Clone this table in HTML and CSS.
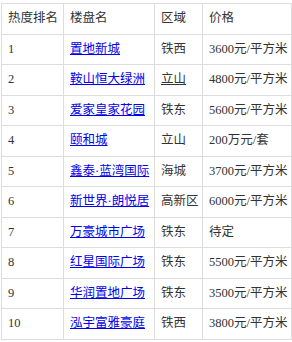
FILE: index.html
```html
<!DOCTYPE html>
<html>
<head>
<meta charset="utf-8">
<link rel="stylesheet" href="styles.css">
</head>
<body>
<table class="rank">
  <colgroup>
    <col class="c-rank">
    <col class="c-name">
    <col class="c-area">
    <col class="c-price">
  </colgroup>
  <thead>
    <tr><th>热度排名</th><th>楼盘名</th><th>区域</th><th>价格</th></tr>
  </thead>
  <tbody>
    <tr><td>1</td><td><a href="#">置地新城</a></td><td>铁西</td><td>3600元/平方米</td></tr>
    <tr><td>2</td><td><a href="#">鞍山恒大绿洲</a></td><td><a class="plain" href="#">立山</a></td><td>4800元/平方米</td></tr>
    <tr><td>3</td><td><a href="#">爱家皇家花园</a></td><td>铁东</td><td>5600元/平方米</td></tr>
    <tr><td>4</td><td><a href="#">颐和城</a></td><td>立山</td><td>200万元/套</td></tr>
    <tr><td>5</td><td><a href="#">鑫泰·蓝湾国际</a></td><td>海城</td><td>3700元/平方米</td></tr>
    <tr><td>6</td><td><a href="#">新世界·朗悦居</a></td><td>高新区</td><td>6000元/平方米</td></tr>
    <tr><td>7</td><td><a href="#">万豪城市广场</a></td><td>铁东</td><td>待定</td></tr>
    <tr><td>8</td><td><a href="#">红星国际广场</a></td><td>铁东</td><td>5500元/平方米</td></tr>
    <tr><td>9</td><td><a href="#">华润置地广场</a></td><td>铁东</td><td>3500元/平方米</td></tr>
    <tr><td>10</td><td><a href="#">泓宇富雅豪庭</a></td><td>铁西</td><td>3800元/平方米</td></tr>
  </tbody>
</table>
</body>
</html>
```
FILE: styles.css
```css
html, body {
  background: #fff;
}
body {
  margin: 3px 0 0 1px;
  font-family: "Liberation Serif", "Noto Sans CJK SC", serif;
  font-size: 12.5px;
  color: #333;
}
.rank {
  border-collapse: collapse;
  table-layout: fixed;
  width: 290px;
}
.c-rank { width: 62px; }
.c-name { width: 91px; }
.c-area { width: 48px; }
.c-price { width: 89px; }
.rank th,
.rank td {
  border: 1px solid #ddd;
  padding: 6px 5px 6px 6px;
  line-height: 17.5px;
  height: 17.5px;
  text-align: left;
  font-weight: normal;
  white-space: nowrap;
  overflow: hidden;
  vertical-align: middle;
}
.rank a {
  color: #0000ee;
  text-decoration: underline;
}
.rank a.plain {
  color: #333;
}
```
